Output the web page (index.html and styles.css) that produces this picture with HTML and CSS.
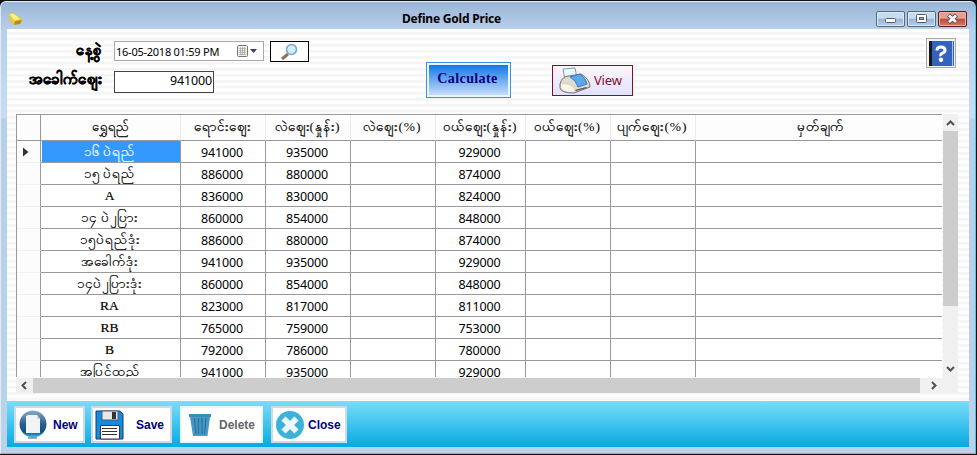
FILE: index.html
```html
<!DOCTYPE html>
<html lang="my"><head><meta charset="utf-8"><title>Define Gold Price</title><link rel="stylesheet" href="styles.css"></head>
<body>
<div class="window">
<header class="titlebar">
<svg class="app" width="17" height="16" viewBox="0 0 17 16"><path d="M1 4Q2 1 5 2L13 7Q16 12 12 13L6 14Q1 10 1 4" fill="#e9c92e"/><path d="M2 4Q3 2 6 3L12 8 7 10Z" fill="#fff28a"/><path d="M7 10L14 9 12 13 6 14Z" fill="#b98a22"/></svg>
<h1 class="title">Define Gold Price</h1>
<div class="controls">
<i class="ctl"><svg width="27" height="14"><rect x="8.500" y="6.500" width="10" height="4" rx="1" fill="#fff" stroke="#555c68"/></svg></i>
<i class="ctl"><svg width="27" height="14"><rect x="8.500" y="2.500" width="10" height="8" rx="1" fill="#fff" stroke="#555c68"/><rect x="11.500" y="5.500" width="4" height="2" fill="#8fb4d8" stroke="#555c68"/></svg></i>
<i class="ctl red"><svg width="27" height="14"><path d="M9.500 3l8 7.500m0-7.500l-8 7.500" stroke="#64505a" stroke-width="4.500"/><path d="M10 3.500l7 6.500m0-6.500l-7 6.500" stroke="#fff" stroke-width="2.600"/></svg></i>
</div>
</header>
<main class="content">
<section class="form">
<div class="fields">
<label class="lab">နေ့စွဲ</label>
<div class="date"><span>16-05-2018 01:59 PM</span><svg width="23" height="14" viewBox="0 0 23 14"><rect x="1.500" y="1.500" width="10" height="11" rx="1" fill="#eee" stroke="#777"/><path d="M3 4.500h7M3 6.500h7M3 8.500h7M3 10.500h7M4.500 3v8M6.500 3v8M8.500 3v8" stroke="#999" stroke-width=".6"/><path d="M14 5h7l-3.500 4z" fill="#346"/></svg></div>
<button class="search"><svg width="18" height="18" viewBox="0 0 18 18"><path d="M1 16l6-5" stroke="#936d62" stroke-width="3"/><circle cx="10.500" cy="6.500" r="5" fill="#d0eefb" stroke="#7ba4c8" stroke-width="1.600"/></svg></button>
<label class="lab second">အခေါက်ဈေး</label>
<div class="price">941000</div>
</div>
<button class="calc"><span>Calculate</span></button>
<button class="view"><svg width="32" height="28" viewBox="0 0 32 28"><path d="M4 2l12-1 2 10-12 2z" fill="#eef8ff" stroke="#8299b0"/><path d="M1 17Q3 9 10 9L22 7Q31 12 31 20L15 26Q2 26 1 21z" fill="#ddd9cd" stroke="#77746f"/><path d="M11 10l10-3q6 4 7 10l-9 3q-2-7-8-10" fill="#5aa9ee" stroke="#387bb8"/><path d="M2 17q10 0 13 5v3Q3 25 2 20z" fill="#f7f4eb"/><path d="M16 23l11-3 1 1-11 3z" fill="#555"/></svg><span>View</span></button>
<button class="help"><svg width="25" height="25" viewBox="0 0 25 25"><path d="M0 0h25v25H0z" fill="#3563bb"/><path d="M0 0h3v25H0z" fill="#15181f"/><path d="M23.500 0v25" stroke="#a6c4f5"/><path d="M8 9.500q0-3.500 4-3.500t4 3.200q0 2-2.500 3T12 15" fill="none" stroke="#fff" stroke-width="3"/><circle cx="12" cy="18.700" r="2.200" fill="#fff"/></svg></button>
</section>
<section class="gridbox">
<div class="table">
<div class="row head"><b></b><b>ရွှေရည်</b><b>ရောင်းဈေး</b><b>လဲဈေး<s>(</s>နှုန်း<s>)</s></b><b>လဲဈေး<s>(%)</s></b><b>ဝယ်ဈေး<s>(</s>နှုန်း<s>)</s></b><b>ဝယ်ဈေး<s>(%)</s></b><b>ပျက်ဈေး<s>(%)</s></b><b>မှတ်ချက်</b></div>
<div class="row"><b><svg width="6" height="10"><path d="M0 0.500v9l5.500-4.500z" fill="#333"/></svg></b><b class="sel">၁၆ ပဲရည်</b><b>941000</b><b>935000</b><b></b><b>929000</b><b></b><b></b><b></b></div>
<div class="row"><b></b><b>၁၅ ပဲရည်</b><b>886000</b><b>880000</b><b></b><b>874000</b><b></b><b></b><b></b></div>
<div class="row"><b></b><b>A</b><b>836000</b><b>830000</b><b></b><b>824000</b><b></b><b></b><b></b></div>
<div class="row"><b></b><b>၁၄ ပဲ၂ပြား</b><b>860000</b><b>854000</b><b></b><b>848000</b><b></b><b></b><b></b></div>
<div class="row"><b></b><b>၁၅ပဲရည်ဒုံး</b><b>886000</b><b>880000</b><b></b><b>874000</b><b></b><b></b><b></b></div>
<div class="row"><b></b><b>အခေါက်ဒုံး</b><b>941000</b><b>935000</b><b></b><b>929000</b><b></b><b></b><b></b></div>
<div class="row"><b></b><b>၁၄ပဲ၂ပြားဒုံး</b><b>860000</b><b>854000</b><b></b><b>848000</b><b></b><b></b><b></b></div>
<div class="row"><b></b><b>RA</b><b>823000</b><b>817000</b><b></b><b>811000</b><b></b><b></b><b></b></div>
<div class="row"><b></b><b>RB</b><b>765000</b><b>759000</b><b></b><b>753000</b><b></b><b></b><b></b></div>
<div class="row"><b></b><b>B</b><b>792000</b><b>786000</b><b></b><b>780000</b><b></b><b></b><b></b></div>
<div class="row"><b></b><b>အပြင်ထည်</b><b>941000</b><b>935000</b><b></b><b>929000</b><b></b><b></b><b></b></div>
</div>
<div class="vbar"><svg width="15" height="17"><path d="M4 11l3.500-3.500 3.500 3.500" class="chev"/></svg><i class="vthumb"></i><svg class="end" width="15" height="17"><path d="M4 7l3.500 3.500 3.500-3.500" class="chev"/></svg></div>
<div class="hbar"><svg width="17" height="15"><path d="M10 4l-3.500 3.500 3.500 3.500" class="chev"/></svg><i class="hthumb"></i><svg width="22" height="15"><path d="M12 4l3.500 3.500-3.500 3.500" class="chev"/></svg></div>
</section>
</main>
<footer class="actions">
<button class="act new"><svg width="28" height="29" viewBox="0 0 28 29"><defs><linearGradient id="orb" x2="0" y2="1"><stop stop-color="#8aabc5"/><stop offset=".5" stop-color="#285f90"/><stop offset=".8" stop-color="#105184"/><stop offset="1" stop-color="#4ac6ec"/></linearGradient></defs><circle cx="14" cy="14" r="13.500" fill="url(#orb)"/><path d="M9 5h9l3 4v14H7V6z" fill="#f1f3f4"/><path d="M18 5v4h3" fill="#cbd5dd"/><path d="M9 28h9" stroke="#357" stroke-width="1"/></svg><span>New</span></button>
<button class="act save"><svg width="29" height="30" viewBox="0 0 29 30"><path d="M1 1h24l3 3v25H1z" fill="#138be0" stroke="#143c60"/><path d="M7 1h16v9H7z" fill="#e7e9e9" stroke="#557"/><path d="M17 2h4v7h-4z" fill="#333"/><path d="M5.500 15.500h19V29h-19z" fill="#fff" stroke="#335"/><path d="M7 18.500h15M7 21.500h15M7 24.500h15" stroke="#333"/></svg><span>Save</span></button>
<button class="act delete"><svg width="24" height="24" viewBox="0 0 24 24"><path d="M1 1h22v3H1z" fill="#3a8cb9"/><path d="M2 4h20L19.500 23H5z" fill="#4698c6"/><path d="M6.500 5l1.500 16M10.500 5v16M14 5v16M18 5l-1.500 16" stroke="#2b6f9c" stroke-width="1.200"/></svg><span>Delete</span></button>
<button class="act close"><svg width="28" height="28" viewBox="0 0 28 28"><circle cx="14" cy="14" r="14" fill="#3bb1dc"/><path d="M7.500 7.500l13 13m0-13l-13 13" stroke="#eef7fb" stroke-width="6"/></svg><span>Close</span></button>
</footer>
</div>
</body></html>
```
FILE: styles.css
```css
*{box-sizing:border-box}
body{margin:0;background:#101216;overflow:hidden;font:12px "Noto Sans",sans-serif;color:#000}
button{padding:0;margin:0;font:inherit;display:flex;align-items:center}
svg{display:block;flex:none}
.window{width:976px;height:453px;margin-top:1px;border:1px solid #49c8ea;border-top-color:#e6eef8;border-left-color:#e0ecf8;border-radius:6px 6px 0 0;background:linear-gradient(#9ab5d8 0,#b9d0ea 28px,#c9dcf1 115px,#b8cfe8 118px,#bcd1ea 100%);padding:0 6px}
.titlebar{height:27px;display:flex;align-items:center;justify-content:flex-end}
.app{margin-right:auto;margin-left:1px;margin-top:6px}
.title{font-size:12px;line-height:16px;letter-spacing:-.2px;margin:6px 375px 0 0;font-weight:700}
.controls{display:flex;gap:2px;margin:7px 2px 0 0}
.ctl{width:29px;height:16px;border:1px solid #56697f;border-radius:2px;background:linear-gradient(#c8daee 0 45%,#98b5d4 50%,#b5cfea);box-shadow:inset 0 0 0 1px #dbe8f5}
.ctl.red{border-color:#5c1a20;background:linear-gradient(#e3a08f 0 45%,#c04a38 50%,#d77a63);box-shadow:inset 0 0 0 1px #eab4a6}
.content{height:372px;padding:8px 11px 0 9px;background:repeating-linear-gradient(#fefefe 0 3px,#f5f5f5 3px 5px,#fafafa 5px 6px)}
.form{height:77px;display:flex;align-items:flex-start}
.fields{display:grid;grid-template-columns:86px 150px 39px;grid-template-rows:21px 23px;column-gap:6px;row-gap:9px;width:287px;margin-top:4px;flex:none}
.lab{justify-self:end;font-size:14.5px;line-height:20px;font-weight:700;-webkit-text-stroke:.5px #000;margin-top:-2px;white-space:nowrap}
.second{margin-top:-3px;font-size:15px}
.date{margin-left:6px;width:150px;height:20px;border:1px solid #a9a9a9;background:#fff;display:flex;align-items:center;justify-content:space-between;padding:0 4px 0 1px;font-size:11px;letter-spacing:-.25px}
.search{margin-left:6px;width:39px;height:21px;border:1px solid #000;background:#fff;justify-content:center}
.price{margin-left:6px;width:100px;height:22px;border:1px solid #444;background:#fff;text-align:right;font-size:12.5px;line-height:18px;padding-right:1px;letter-spacing:-.15px}
.calc{margin:25px 0 0 123px;width:85px;height:36px;border:1px solid #3b92e2;background:#e9f7ff;padding:2px;flex:none}
.calc span{width:100%;height:100%;background:linear-gradient(#1477e4,#c7ddfa);color:#000080;font:bold 14px/28px "Liberation Serif",serif;letter-spacing:.4px;text-align:center;padding-right:2px}
.view{margin:28px 0 0 41px;width:81px;height:31px;border:1px solid #7b1030;background:linear-gradient(#fdf5f8,#dfe3ff);color:#8b0a32;font-size:13px;letter-spacing:-.2px;padding-left:6px;gap:3px;flex:none}
.view span{margin-top:-2px}
.help{margin:1px 2px 0 auto;width:30px;height:30px;border:1px solid #aaa;background:#f2f2f2;justify-content:center}
.gridbox{display:grid;grid-template-columns:927px 15px;grid-template-rows:264px 15px}
.table{height:263px;overflow:hidden;border-top:1px solid #999;border-left:1px solid #999;width:926px;background:#fff}
.row{display:grid;grid-template-columns:24px 140px 85px 85px 85px 90px 85px 85px 247px;height:22px}
.row b{border-right:1px solid #999;border-bottom:1px solid #999;font-weight:400;font-size:12.5px;letter-spacing:-.15px;line-height:23px;text-align:center;overflow:hidden;white-space:nowrap;padding-right:2px}
.row b:last-child{border-right:0}
.row b:first-child{background:#fcfcfc;border-bottom-color:#f0f0f0;padding:6px 0 0 6px}
.row b:nth-child(2){font-family:"Liberation Serif","Noto Sans",serif;font-size:13.5px;line-height:22px;letter-spacing:0;padding-right:2px;-webkit-text-stroke:.2px currentColor}
.row .sel{background:#3399ff;color:#fff;box-shadow:inset 1px 0 #fff}
.row.head{height:26px;background:#fdfdfd}
.row.head b,.row.head b:nth-child(2){font-size:13.5px;line-height:23px;letter-spacing:0;border-right-color:#e8eaf0;border-bottom-color:#999;-webkit-text-stroke:.25px #000;padding-right:1px}
.row.head b:nth-child(2){font-size:13px}
.row.head b:last-child{padding-left:3px}
.row.head b:first-child{border-right-color:#999}
s{text-decoration:none;font-family:"Liberation Serif",serif;letter-spacing:1px;-webkit-text-stroke:0}
.vbar{background:#f0f0f0;grid-row:1/3;grid-column:2;display:flex;flex-direction:column}
.vthumb{height:175px;background:#cdcdcd}
.end{margin-top:auto;margin-bottom:16px}
.chev{fill:none;stroke:#505050;stroke-width:2}
.hbar{background:#f0f0f0;display:flex}
.hthumb{width:887px;background:#cdcdcd}
.actions{height:46px;background:linear-gradient(#7bddfb,#05aae0);display:flex;align-items:flex-start;padding:5px 0 0 7px}
.act{height:37px;border:2px solid #cfdbe4;background:#fff;color:#000080;font:bold 12px "Liberation Sans",sans-serif}
.new{width:71px;padding-left:3px;gap:6px}
.save{width:81px;margin-left:6px;padding-left:2px;gap:12px}
.delete{width:83px;margin-left:8px;padding-left:6px;gap:7px;color:#666;border-color:#e8f5fc}
.close{width:76px;margin-left:8px;padding-left:3px;gap:4px}
```
